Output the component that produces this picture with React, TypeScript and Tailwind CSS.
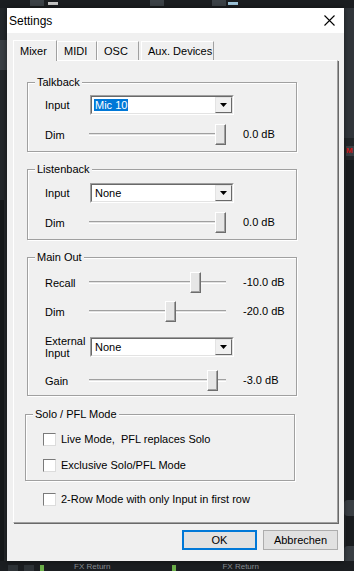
import React from "react";

const font = { fontFamily: '"Liberation Sans", Arial, sans-serif' };

const Slider = ({ pos }: { pos: number }) => (
  <div className="relative w-[137px] h-[21px]">
    <div className="absolute left-0 right-0 top-[9px] h-[3px] border-t border-t-[#a0a0a0] border-b border-b-white bg-[#e3e3e3]" />
    <div
      className="absolute top-0 w-[11px] h-[21px] bg-[#e6e6e6] border border-t-white border-l-white border-r-[#6d6d6d] border-b-[#6d6d6d] shadow-[inset_-1px_-1px_0_#a0a0a0]"
      style={{ left: pos }}
    />
  </div>
);

const Select = ({ value, selected }: { value: string; selected?: boolean }) => (
  <div className="w-[144px] h-[20px] border border-t-[#a0a0a0] border-l-[#a0a0a0] border-r-white border-b-white">
    <div className="flex h-full items-center bg-white border border-t-[#696969] border-l-[#696969] border-r-[#e3e3e3] border-b-[#e3e3e3]">
      <div className="flex-1 pl-[2px]">
        <span className={selected ? "bg-[#0078d7] text-white px-[1px]" : "px-[1px]"}>
          {value}
        </span>
      </div>
      <div className="flex h-[16px] w-[17px] items-center justify-center bg-[#f0f0f0] border border-t-[#e3e3e3] border-l-[#e3e3e3] border-r-[#696969] border-b-[#696969]">
        <svg width="7" height="4" viewBox="0 0 7 4">
          <path d="M0 0h7L3.5 4z" fill="#000" />
        </svg>
      </div>
    </div>
  </div>
);

const Check = ({ label }: { label: string }) => (
  <div className="flex h-[13px] items-center gap-[5px]">
    <div className="w-[13px] h-[13px] bg-white border border-t-[#7a7a7a] border-l-[#7a7a7a] border-r-[#dcdcdc] border-b-[#dcdcdc]" />
    <span className="whitespace-pre">{label}</span>
  </div>
);

const Group = ({ title, className, children }: { title: string; className: string; children: React.ReactNode }) => (
  <div className={"relative border border-[#a0a0a0] shadow-[inset_1px_1px_0_#fff,1px_1px_0_#fff] " + className}>
    <span className="absolute -top-[8px] left-[7px] bg-[#f0f0f0] px-[2px] leading-[14px]">{title}</span>
    {children}
  </div>
);

const Row = ({ label, children, value }: { label: React.ReactNode; children: React.ReactNode; value?: string }) => (
  <div className="flex items-center">
    <div className="w-[45px] leading-[12px]">{label}</div>
    {children}
    {value && <span className="ml-[17px]">{value}</span>}
  </div>
);

const Tab = ({ label, active, w }: { label: string; active?: boolean; w: string }) => (
  <div
    className={
      "flex items-center pl-[6px] border-t border-l border-t-white border-l-white border-r border-r-[#a0a0a0] " +
      w +
      (active ? " h-[21px] bg-[#f0f0f0] -mb-[1px] relative z-10" : " h-[19px] bg-[#f0f0f0]")
    }
  >
    {label}
  </div>
);

export default function App() {
  return (
    <div className="relative w-[354px] h-[571px] overflow-hidden bg-[#23272a] text-[11px] text-black" style={font}>
      {/* mixer behind the dialog */}
      <div className="absolute left-0 top-0 w-[354px] h-[8px] bg-[#1b1e21]" />
      <div className="absolute left-[30px] top-[0px] w-[14px] h-[6px] bg-[#3c4247]" />
      <div className="absolute left-[48px] top-[2px] w-[10px] h-[3px] bg-[#c8c8c8]" />
      <div className="absolute left-[150px] top-[0px] w-[14px] h-[6px] bg-[#3c4247]" />
      <div className="absolute left-[212px] top-[0px] w-[14px] h-[6px] bg-[#3c4247]" />
      <div className="absolute left-[228px] top-[2px] w-[10px] h-[3px] bg-[#9fc6dc]" />
      <div className="absolute left-[0px] top-[40px] w-[7px] h-[30px] bg-[#3a3f44]" />
      <div className="absolute left-[0px] top-[200px] w-[4px] h-[380px] bg-[#15181a]" />
      <div className="absolute left-[344px] top-[8px] w-[10px] h-[130px] bg-[#31363b]" />
      <div className="absolute left-[346px] top-[146px] w-[8px] h-[10px] bg-[#3a3f44] text-[#d01818] text-[8px] font-bold leading-[10px]">M</div>
      <div className="absolute left-[346px] top-[160px] w-[8px] h-[400px] bg-[#1a1d20]" />
      <div className="absolute left-[344px] top-[500px] w-[10px] h-[16px] rounded-l bg-[#3a3f44]" />
      <div className="absolute left-[344px] top-[546px] w-[10px] h-[16px] rounded-l bg-[#3a3f44]" />
      <div className="absolute left-0 top-[561px] flex h-[10px] w-[354px] items-end gap-[6px] bg-[#1b1e21] pl-[8px] text-[8px] text-[#8a8f94] leading-[8px]">
        <span className="w-[10px] h-[6px] bg-[#2e3337]" />
        <span className="w-[10px] h-[6px] bg-[#2e3337]" />
        <span className="w-[4px] h-[6px] bg-[#6cb04a]" />
        <span className="ml-[24px]">FX Return</span>
        <span className="ml-[56px] w-[4px] h-[6px] bg-[#6cb04a]" />
        <span className="ml-[40px]">FX Return</span>
      </div>

      {/* dialog */}
      <div className="absolute left-[7px] top-[8px] flex w-[337px] h-[553px] flex-col bg-[#f0f0f0] shadow-[0_0_6px_rgba(0,0,0,0.5)]">
        <div className="flex h-[25px] items-center justify-between bg-white pl-[2px] pr-[9px]">
          <span className="text-[12px]">Settings</span>
          <svg width="11" height="11" viewBox="0 0 11 11">
            <path d="M0.5 0.5l10 10M10.5 0.5l-10 10" stroke="#000" strokeWidth="1.1" />
          </svg>
        </div>

        <div className="flex flex-col px-[6px] pt-[7px]">
          <div className="flex items-end">
            <Tab label="Mixer" active w="w-[44px]" />
            <Tab label="MIDI" w="w-[40px]" />
            <Tab label="OSC" w="w-[42px] mr-[2px]" />
            <Tab label="Aux. Devices" w="w-[73px]" />
          </div>

          <div className="flex h-[463px] w-[325px] flex-col border border-t-white border-l-white border-r-[#a0a0a0] border-b-[#a0a0a0] shadow-[1px_1px_0_#696969] pl-[13px] pt-[21px]">
            <Group title="Talkback" className="w-[270px] h-[70px] pt-[12px] pl-[17px]">
              <Row label="Input">
                <Select value="Mic 10" selected />
              </Row>
              <div className="mt-[9px]">
                <Row label="Dim" value="0.0 dB">
                  <div className="-ml-[1px]">
                    <Slider pos={126} />
                  </div>
                </Row>
              </div>
            </Group>

            <Group title="Listenback" className="mt-[17px] w-[270px] h-[71px] pt-[13px] pl-[17px]">
              <Row label="Input">
                <Select value="None" />
              </Row>
              <div className="mt-[9px]">
                <Row label="Dim" value="0.0 dB">
                  <div className="-ml-[1px]">
                    <Slider pos={126} />
                  </div>
                </Row>
              </div>
            </Group>

            <Group title="Main Out" className="mt-[17px] w-[270px] h-[139px] pt-[14px] pl-[17px]">
              <Row label="Recall" value="-10.0 dB">
                <div className="-ml-[1px]">
                  <Slider pos={101} />
                </div>
              </Row>
              <div className="mt-[8px]">
                <Row label="Dim" value="-20.0 dB">
                  <div className="-ml-[1px]">
                    <Slider pos={76} />
                  </div>
                </Row>
              </div>
              <div className="mt-[13px]">
                <Row label={<>External<br />Input</>}>
                  <Select value="None" />
                </Row>
              </div>
              <div className="mt-[11px]">
                <Row label="Gain" value="-3.0 dB">
                  <div className="-ml-[1px]">
                    <Slider pos={118} />
                  </div>
                </Row>
              </div>
            </Group>

            <Group title="Solo / PFL Mode" className="-ml-[2px] mt-[18px] w-[270px] h-[67px] pt-[18px] pl-[17px]">
              <Check label="Live Mode,  PFL replaces Solo" />
              <div className="mt-[13px]">
                <Check label="Exclusive Solo/PFL Mode" />
              </div>
            </Group>

            <div className="mt-[12px] pl-[16px]">
              <Check label="2-Row Mode with only Input in first row" />
            </div>
          </div>

          <div className="mt-[7px] flex justify-end gap-[6px] pr-[0px]">
            <button className="h-[20px] w-[75px] border border-[#0078d7] bg-[#e1e1e1] shadow-[inset_0_0_0_1px_#0078d7]">OK</button>
            <button className="h-[20px] w-[75px] border border-[#adadad] bg-[#e1e1e1]">Abbrechen</button>
          </div>
        </div>
      </div>
    </div>
  );
}
